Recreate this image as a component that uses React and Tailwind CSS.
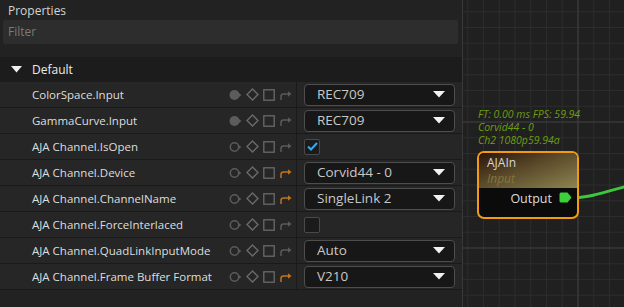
import React from "react";

const rows = [
  { label: "ColorSpace.Input", kind: "select", value: "REC709", filled: true },
  { label: "GammaCurve.Input", kind: "select", value: "REC709", filled: true },
  { label: "AJA Channel.IsOpen", kind: "check", checked: true },
  { label: "AJA Channel.Device", kind: "select", value: "Corvid44 - 0", linked: true },
  { label: "AJA Channel.ChannelName", kind: "select", value: "SingleLink 2", linked: true },
  { label: "AJA Channel.ForceInterlaced", kind: "check", checked: false },
  { label: "AJA Channel.QuadLinkInputMode", kind: "select", value: "Auto" },
  { label: "AJA Channel.Frame Buffer Format", kind: "select", value: "V210", linked: true },
];

// little row tool icons: keyframe dot, diamond, square, link arrow
const RowIcons = ({ filled, linked }) => (
  <div className="flex items-center gap-[4px] pr-[4px]">
    <svg width="13" height="12" viewBox="0 0 13 12">
      {filled ? (
        <>
          <circle cx="5.5" cy="6" r="5" fill="#5c5c5c" />
          <path d="M9 3.3 L12.5 6 L9 8.7 Z" fill="#5c5c5c" />
        </>
      ) : (
        <>
          <circle cx="5.5" cy="6" r="4.2" fill="none" stroke="#5c5c5c" strokeWidth="1.5" />
          <path d="M9.4 4 L12.5 6 L9.4 8 Z" fill="#5c5c5c" />
        </>
      )}
    </svg>
    <svg width="13" height="13" viewBox="0 0 13 13">
      <path d="M6.5 1 L12 6.5 L6.5 12 L1 6.5 Z" fill="none" stroke="#6a6a6a" strokeWidth="1.4" />
    </svg>
    <svg width="12" height="12" viewBox="0 0 12 12">
      <rect x="0.8" y="0.8" width="10.4" height="10.4" fill="none" stroke="#6a6a6a" strokeWidth="1.3" />
    </svg>
    <svg width="13" height="12" viewBox="0 0 13 12">
      <path
        d="M2 11 V7.5 Q2 5 4.5 5 H10"
        fill="none"
        stroke={linked ? "#c4711c" : "#5a5a5a"}
        strokeWidth="1.5"
      />
      <path d="M9 2.3 L12.5 5 L9 7.7 Z" fill={linked ? "#c4711c" : "#5a5a5a"} />
    </svg>
  </div>
);

const Select = ({ value }) => (
  <div className="flex h-[22px] w-[151px] items-center justify-between rounded-[4px] border border-[#4e4e4e] bg-[#171717] pl-[12px] pr-[9px] text-[13.5px] text-[#c8c8c8]">
    <span>{value}</span>
    <svg width="12" height="7" viewBox="0 0 12 7">
      <path d="M0 0 H12 L6 6.5 Z" fill="#f2f2f2" />
    </svg>
  </div>
);

const Check = ({ checked }) => (
  <div className="flex h-[16px] w-[16px] items-center justify-center rounded-[2px] border border-[#4a4a4a] bg-[#1b1b1b]">
    {checked && (
      <svg width="11" height="9" viewBox="0 0 11 9">
        <path d="M1 4.5 L4 7.5 L10 1" fill="none" stroke="#3aa8f0" strokeWidth="2" />
      </svg>
    )}
  </div>
);

const Canvas = () => {
  const minor = [];
  for (let i = 0; i < 12; i++) minor.push(4.75 + i * 15.75);
  const minorY = [];
  for (let i = 0; i < 21; i++) minorY.push(11.75 + i * 15.75);
  return (
    <div className="relative flex-1 overflow-hidden bg-[#202020]">
      <svg className="absolute inset-0" width="161" height="307">
        {minor.map((x) => (
          <line key={"v" + x} x1={x} y1="0" x2={x} y2="307" stroke="#2c2c2c" strokeWidth="1" />
        ))}
        {minorY.map((y) => (
          <line key={"h" + y} x1="0" y1={y} x2="161" y2={y} stroke="#2c2c2c" strokeWidth="1" />
        ))}
        <line x1="115" y1="0" x2="115" y2="307" stroke="#3c3c3c" strokeWidth="1.2" />
        <line x1="0" y1="122" x2="161" y2="122" stroke="#3c3c3c" strokeWidth="1.2" />
        <line x1="0" y1="248" x2="161" y2="248" stroke="#3c3c3c" strokeWidth="1.2" />
        <path d="M106 198 C128 198 140 192 165 186" fill="none" stroke="#3cc83c" strokeWidth="3" />
      </svg>

      <div className="absolute left-[15px] top-[108px] text-[10.5px] italic leading-[13px] text-[#6e9c12]">
        <div>FT: 0.00 ms FPS: 59.94</div>
        <div>Corvid44 - 0</div>
        <div>Ch2 1080p59.94a</div>
      </div>

      <div className="absolute left-[14px] top-[151px] h-[68px] w-[102px] overflow-hidden rounded-[7px] border-2 border-[#f29a14] bg-[#0b0b0b]">
        <div className="h-[35px] bg-[linear-gradient(160deg,#2a1608_0%,#5a4a2a_45%,#8c8450_100%)] pl-[8px] pt-[2px]">
          <div className="text-[12px] leading-[16px] text-[#d8d8d8]">AJAIn</div>
          <div className="text-[12px] italic leading-[16px] text-[#817640]">Input</div>
        </div>
        <div className="relative h-[29px] pr-[25px] pt-[3px] text-right text-[12.5px] leading-[16px] text-[#dcdcdc]">
          Output
          <svg className="absolute right-[5px] top-[4px]" width="13" height="11" viewBox="0 0 13 11">
            <path d="M2 0.5 H8.5 L12.5 5.5 L8.5 10.5 H2 Q0.5 10.5 0.5 9 V2 Q0.5 0.5 2 0.5 Z" fill="#3cd03c" />
          </svg>
        </div>
      </div>
    </div>
  );
};

export default function App() {
  return (
    <div
      className="flex h-[307px] w-[624px] overflow-hidden bg-[#202020]"
      style={{ fontFamily: "'Open Sans', 'Noto Sans', sans-serif" }}
    >
      <div className="flex w-[462px] flex-col bg-[#222222]">
        <div className="h-[20px] pl-[8px] text-[12px] leading-[22px] text-[#d4d4d4]">Properties</div>
        <div className="mx-[3px] flex h-[24px] w-[455px] items-center rounded-[2px] bg-[#2d2d2d] pl-[5px] text-[12px] text-[#7a7a7a]">
          Filter
        </div>
        <div className="h-[13px]" />
        <div className="flex h-[25px] items-center bg-[#1c1c1c]">
          <svg className="ml-[11px]" width="11" height="7" viewBox="0 0 11 7">
            <path d="M0 0 H11 L5.5 6.5 Z" fill="#f0f0f0" />
          </svg>
          <span className="ml-[10px] text-[12px] text-[#ececec]">Default</span>
        </div>
        {rows.map((r) => (
          <div key={r.label} className="flex h-[26px] border-b border-[#1a1a1a] bg-[#262626]">
            <div className="flex w-[297px] items-center justify-between border-r border-[#1a1a1a] pl-[32px]">
              <span className="whitespace-nowrap text-[11.5px] text-[#dedede]">{r.label}</span>
              <RowIcons filled={r.filled} linked={r.linked} />
            </div>
            <div className="flex flex-1 items-center pl-[7px]">
              {r.kind === "select" ? <Select value={r.value} /> : <Check checked={r.checked} />}
            </div>
          </div>
        ))}
      </div>
      <div className="w-[1px] bg-[#383838]" />
      <Canvas />
    </div>
  );
}
